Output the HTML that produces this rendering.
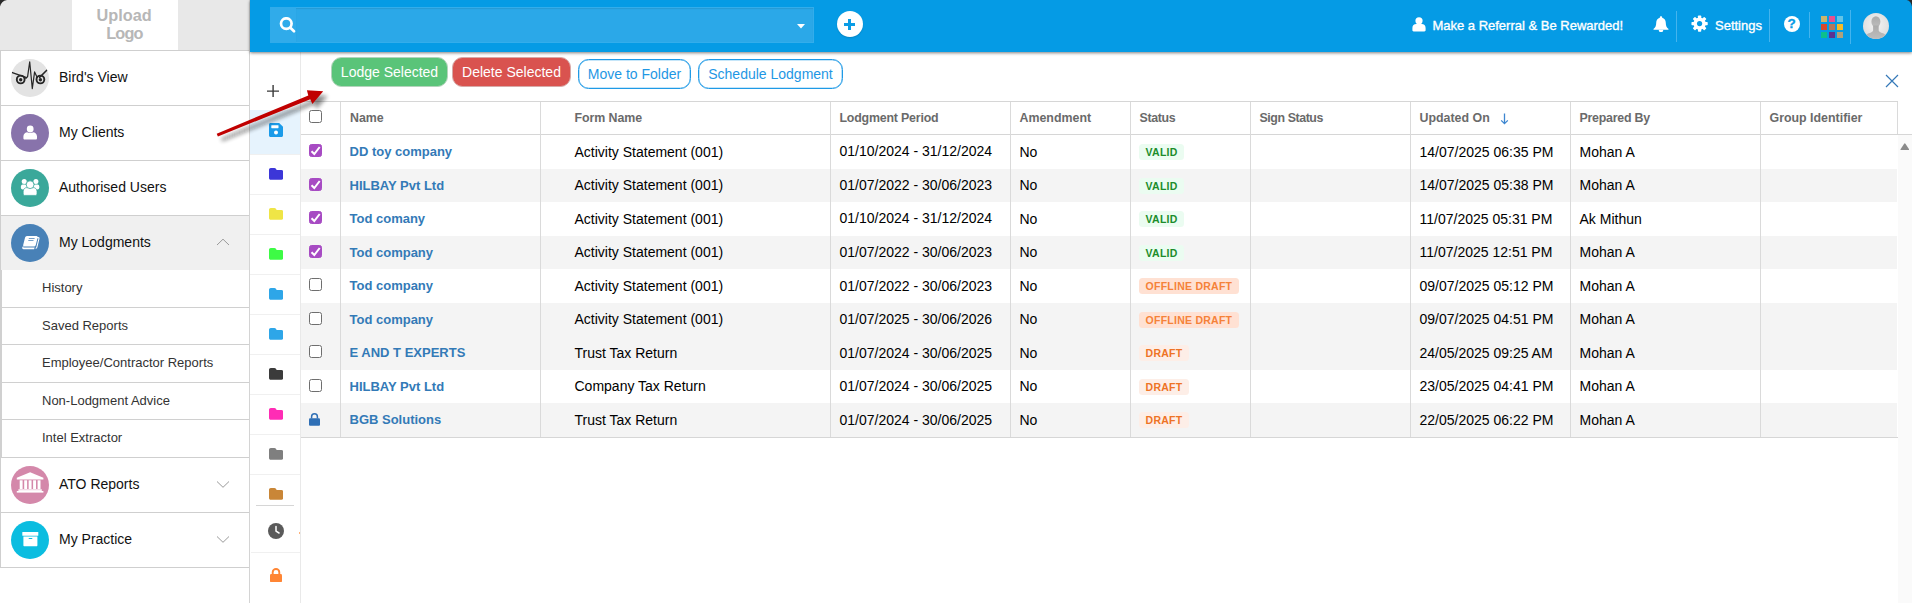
<!DOCTYPE html>
<html>
<head>
<meta charset="utf-8">
<title>My Lodgments</title>
<style>
*{box-sizing:border-box;margin:0;padding:0}
html,body{width:1912px;height:603px;overflow:hidden;background:#fff;font-family:"Liberation Sans",sans-serif;color:#000}
div,span{font-family:"Liberation Sans",sans-serif}
.a{position:absolute;white-space:nowrap}
#side{position:absolute;left:0;top:0;width:250px;height:603px;background:#fff;border-right:1px solid #d4d4d4}
#logo{position:absolute;left:0;top:0;width:249px;height:50px;background:#e8e8e8}
#logo .box{position:absolute;left:72px;top:0;width:106px;height:50px;background:#fff;text-align:center;color:#b7b7b7;font-weight:bold;font-size:16.300px;line-height:18px}
.mi{position:absolute;left:0;width:249px;height:56px;border-top:1px solid #cfcfcf;border-left:1px solid #cfcfcf;background:#fff}
.mi.sel{background:#f0f0f0}
.mi .ic{position:absolute;left:10px;top:8px;width:38px;height:38px;border-radius:50%;overflow:hidden}
.mi .tx{position:absolute;left:58px;top:0;line-height:53px;font-size:14px;color:#111;white-space:nowrap}
.mi svg.ch{position:absolute;left:214.800px;top:21px}
.si{position:absolute;left:0;width:249px;height:38px;border-top:1px solid #d0d0d0;border-left:2px solid #d0d0d0;font-size:13px;color:#333;padding-left:40px;line-height:36px;white-space:nowrap;background:#fff}
#top{z-index:5;position:absolute;left:250px;top:0;width:1662px;height:52px;background:#059be5;box-shadow:0 1px 3px rgba(0,0,0,.5)}
#search{position:absolute;left:20px;top:7px;width:544px;height:36px;background:#2ba8e8;box-shadow:inset 0 0 0 1px #33adeb}
.vs{position:absolute;width:1px;background:#44b4ee}
.tt{position:absolute;color:#fff;font-size:13px;white-space:nowrap;-webkit-text-stroke:.35px #fff}
#strip{position:absolute;left:250px;top:52px;width:51px;height:551px;background:#fff;border-right:1px solid #e9e9e9}
.fi{position:absolute;left:0;width:50px;height:40px;border-top:1px solid #f1f1f1}
.fi svg{position:absolute;left:18px;top:13px}
.btn{position:absolute;border-radius:10.500px;font-size:14px;text-align:center;white-space:nowrap}
#tbl{position:absolute;left:301px;top:101px;width:1597px;height:337px;border-top:1px solid #d6d6d6;border-bottom:1px solid #d6d6d6}
.vl{position:absolute;top:0;width:1px;height:335px;background:#dadada}
.row{position:absolute;left:0;width:1596px;height:33.5px}
.row.g{background:#f4f4f4}
.th{position:absolute;top:0;height:32px;line-height:32px;font-size:12.4px;font-weight:bold;color:#6a6a6a;white-space:nowrap}
.c{position:absolute;top:0;height:34px;line-height:34px;font-size:14px;color:#000;white-space:nowrap}
.c.nm{color:#337ab7;font-weight:bold;font-size:13px}
.bd{position:absolute;height:15.5px;border-radius:3.5px;font-size:10.5px;letter-spacing:.25px;font-weight:bold;line-height:16px;padding:0 6.4px 0 6.6px;white-space:nowrap}
.bd.v{background:#ebfcf1;color:#1b8d2b}
.bd.o{background:#ffe1d3;color:#f58239}
.bd.d{background:#fdeee7;color:#ee7325}
.cb{position:absolute;left:8px;width:13px;height:13px;border:1px solid #6e6e6e;border-radius:2.5px;background:#fff}
.cb.on{background:#a74bc3;border-color:#a74bc3}
.cb.on svg{position:absolute;left:-1px;top:-1px}
</style>
</head>
<body>
<div id="side">
<div id="logo"><div class="box"><span class="a" style="left:24.500px;top:6.400px">Upload</span><span class="a" style="left:34.200px;top:23.700px;letter-spacing:-.85px">Logo</span></div></div><svg class="a" style="left:0;top:0" width="8" height="8" viewBox="0 0 8 8"><path d="M0 0 H7 C3 .8 .8 3 0 6.600z" fill="#2a2a2a"/></svg>
<div class="mi" style="top:50px"><div class="ic" style="background:#e3e3e3"><svg width="38" height="38" viewBox="0 0 38 38"><g fill="none" stroke="#262626" stroke-linecap="round" stroke-linejoin="round"><path d="M1.300 13.600 L15.600 18.600" stroke-width="1.500"/><path d="M36 11 L28.600 18.400" stroke-width="1.500"/><circle cx="9.700" cy="20.500" r="3.900" stroke-width="1.900"/><circle cx="29.400" cy="20.500" r="3.900" stroke-width="1.900"/><path d="M14.800 19.400 L16.600 17.600 L18.700 2.800 L21.300 29.600 L23.600 12.900 L26.200 18.400" stroke-width="1.200"/></g><circle cx="9.700" cy="20.700" r="1.700" fill="#262626"/><circle cx="29.400" cy="20.700" r="1.700" fill="#262626"/></svg></div><div class="tx">Bird&#x27;s View</div></div>
<div class="mi" style="top:105px"><div class="ic" style="background:#8873ab"><svg width="38" height="38" viewBox="0 0 38 38"><path d="M12.400 24.200 v-1.600 c0-2.700 1.900-4.300 4.100-4.300 h5.400 c2.200 0 4.100 1.600 4.100 4.300 v1.600 c0 .8-.5 1.300-1.300 1.300 h-11 c-.8 0-1.300-.5-1.300-1.300z" fill="#fff"/><circle cx="19.200" cy="15" r="4" fill="#8873ab"/><circle cx="19.200" cy="15" r="3.400" fill="#fff"/></svg></div><div class="tx">My Clients</div></div>
<div class="mi" style="top:160px"><div class="ic" style="background:#3aa89a"><svg width="38" height="38" viewBox="0 0 38 38" fill="#fff"><circle cx="13.200" cy="12.600" r="2.500"/><circle cx="24.900" cy="12.600" r="2.500"/><rect x="9.900" y="15.600" width="6" height="5" rx="1.800"/><rect x="22.300" y="15.600" width="6" height="5" rx="1.800"/><path d="M12.200 25 v-2.400 c0-2.600 1.700-4 3.700-4 h6.400 c2 0 3.700 1.400 3.700 4 V25 c0 .8-.5 1.400-1.300 1.400 h-11.200 c-.8 0-1.300-.6-1.300-1.400z" stroke="#3aa89a" stroke-width=".7"/><circle cx="19.100" cy="15.700" r="3.900" stroke="#3aa89a" stroke-width=".8"/></svg></div><div class="tx">Authorised Users</div></div>
<div class="mi sel" style="top:215px"><div class="ic" style="background:#4881b7"><svg width="38" height="38" viewBox="0 0 38 38"><g transform="translate(19.300,19) skewX(-14)"><path d="M-4 -5.400 h10.600 c.6 0 1 .4 1 1 v8.600 c0 .6-.4 1-1 1" fill="none" stroke="#fff" stroke-width="1.100"/><rect x="-6.600" y="-7" width="12.600" height="10.600" rx="1.500" fill="#fff"/><path d="M-6.600 3.600 h12 v2.600 h-10.700 c-1.600 0-1.900-1.700-1.300-2.600z" fill="#fff"/><path d="M-5.900 4.100 h11.600" stroke="#4881b7" stroke-width=".8"/><path d="M-2.600 -4.400 h5.800 M-2.600 -2.400 h5.200" stroke="#4881b7" stroke-width=".9"/></g></svg></div><div class="tx">My Lodgments</div><svg class="ch" width="14" height="10" viewBox="0 0 14 10"><path d="M1 8 L7 2.2 L13 8" fill="none" stroke="#9a9a9a" stroke-width="1"/></svg></div>
<div class="si" style="top:270px;height:37px;line-height:35px;border-top:0">History</div>
<div class="si" style="top:307px;height:37px;line-height:35px">Saved Reports</div>
<div class="si" style="top:344px;height:38px;line-height:35px">Employee/Contractor Reports</div>
<div class="si" style="top:382px;height:37px;line-height:35px">Non-Lodgment Advice</div>
<div class="si" style="top:419px;height:38px;line-height:35px">Intel Extractor</div>
<div class="mi" style="top:457px"><div class="ic" style="background:#d488aa"><svg width="38" height="38" viewBox="0 0 38 38" fill="#fff"><path d="M19.100 6.200 L32.400 11.700 V13.500 H5.800 V11.700z"/><rect x="8.700" y="14.300" width="2.900" height="8.700"/><rect x="13.200" y="14.300" width="2.900" height="8.700"/><rect x="17.650" y="14.300" width="2.900" height="8.700"/><rect x="22.100" y="14.300" width="2.900" height="8.700"/><rect x="26.600" y="14.300" width="2.900" height="8.700"/><rect x="7.400" y="23.300" width="23.400" height="1.600"/><rect x="5.800" y="25" width="26.600" height="1.600"/></svg></div><div class="tx">ATO Reports</div><svg class="ch" width="14" height="10" viewBox="0 0 14 10"><path d="M1 2.5 L7 8.3 L13 2.5" fill="none" stroke="#9a9a9a" stroke-width="1"/></svg></div>
<div class="mi" style="top:512px"><div class="ic" style="background:#0bbde0"><svg width="38" height="38" viewBox="0 0 38 38" fill="#fff"><rect x="11.300" y="11.100" width="16" height="3.700" rx=".5"/><path d="M12.400 15.500 h14 v8.700 c0 .6-.4 1-1 1 h-12 c-.6 0-1-.4-1-1z"/><rect x="17.600" y="17" width="3.800" height="1.100" rx=".55" fill="#0bbde0"/></svg></div><div class="tx">My Practice</div><svg class="ch" width="14" height="10" viewBox="0 0 14 10"><path d="M1 2.5 L7 8.3 L13 2.5" fill="none" stroke="#9a9a9a" stroke-width="1"/></svg></div>
<div class="a" style="left:0;top:567px;width:249px;height:36px;background:#fff;border-top:1px solid #cfcfcf"></div>
</div>
<div id="top">
<div id="search"><div class="a" style="left:0;top:0;width:26px;height:36px;background:#30abea"></div><div class="a" style="left:26px;top:1px;width:517px;height:34px;box-shadow:inset 0 1px 1px rgba(0,0,0,.085)"></div></div>
<svg class="a" style="left:29px;top:17px" width="17" height="17" viewBox="0 0 17 17"><circle cx="7.300" cy="6.600" r="5.300" fill="none" stroke="#fff" stroke-width="2.700"/><path d="M11.400 10.700 L15 14.200" stroke="#fff" stroke-width="2.700" stroke-linecap="round"/></svg>
<svg class="a" style="left:546.500px;top:23.700px" width="8" height="5" viewBox="0 0 8 5"><path d="M0 0 h8 l-4 4.5z" fill="#fff"/></svg>
<div class="a" style="left:587px;top:11px;width:26px;height:26px;border-radius:50%;background:#fff;box-shadow:0 1px 1.500px rgba(0,0,0,.15)"></div>
<div class="a" style="left:598px;top:19px;width:3px;height:11px;background:#0a9ce5"></div><div class="a" style="left:594px;top:23px;width:11px;height:3px;background:#0a9ce5"></div>
<svg class="a" style="left:1161px;top:16px" width="16" height="16" viewBox="0 0 16 16" fill="#fff"><circle cx="8" cy="4.8" r="3.6"/><path d="M1.4 14.2 v-2.2 c0-2.4 1.6-4 3.8-4 h5.6 c2.2 0 3.8 1.6 3.8 4 v2.2 c0 .7-.5 1.2-1.2 1.2 h-10.8 c-.7 0-1.2-.5-1.2-1.2z"/></svg>
<div class="tt" style="left:1182.400px;top:18px">Make a Referral &amp; Be Rewarded!</div>
<svg class="a" style="left:1403.200px;top:15.800px" width="16" height="16.600" viewBox="0 0 16 17" fill="#fff"><path d="M8 .2 c.7 0 1.200.5 1.200 1.200 v.3 c2.300.6 3.700 2.600 3.700 5.100 c0 3.200.9 4.900 2.600 6.200 c.4.3.2 1.100-.4 1.100 H.9 c-.6 0-.8-.8-.4-1.100 c1.700-1.300 2.600-3 2.600-6.200 c0-2.500 1.400-4.500 3.700-5.100 v-.3 c0-.7.5-1.200 1.200-1.200z"/><path d="M5.700 14 h4.600 c0 1.500-1 2.700-2.300 2.700 s-2.300-1.200-2.300-2.700z"/></svg>
<div class="vs" style="left:1426px;top:11px;height:31px"></div>
<svg class="a" style="left:1441px;top:15px" width="17.200" height="17.200" viewBox="-8.600 -8.600 17.200 17.200"><g fill="#fff"><circle r="6.150"/><rect x="-1.650" y="-8.150" width="3.300" height="16.300" rx=".7" transform="rotate(0)"/><rect x="-1.650" y="-8.150" width="3.300" height="16.300" rx=".7" transform="rotate(45)"/><rect x="-1.650" y="-8.150" width="3.300" height="16.300" rx=".7" transform="rotate(90)"/><rect x="-1.650" y="-8.150" width="3.300" height="16.300" rx=".7" transform="rotate(135)"/></g><circle r="2.600" fill="#059be5"/></svg>
<div class="tt" style="left:1465px;top:18px">Settings</div>
<div class="vs" style="left:1519px;top:9px;height:33px"></div>
<div class="a" style="left:1533.500px;top:15.500px;width:16px;height:16px;border-radius:50%;background:#fff;color:#059be5;font-size:13.500px;font-weight:bold;line-height:16.500px;text-align:center;-webkit-text-stroke:.3px #059be5">?</div>
<div class="vs" style="left:1559px;top:12px;height:26px"></div>
<div class="a" style="left:1571px;top:16px;width:6px;height:6px;background:#c9b56e"></div>
<div class="a" style="left:1579px;top:16px;width:6px;height:6px;background:#e8508f"></div>
<div class="a" style="left:1587px;top:16px;width:6px;height:6px;background:#63c4e6"></div>
<div class="a" style="left:1571px;top:24px;width:6px;height:6px;background:#d9482b"></div>
<div class="a" style="left:1579px;top:24px;width:6px;height:6px;background:#b5785a"></div>
<div class="a" style="left:1587px;top:24px;width:6px;height:6px;background:#f5bc25"></div>
<div class="a" style="left:1571px;top:32px;width:6px;height:6px;background:#0cc08c"></div>
<div class="a" style="left:1579px;top:32px;width:6px;height:6px;background:#5a3392"></div>
<div class="a" style="left:1587px;top:32px;width:6px;height:6px;background:#b0a17c"></div>
<div class="vs" style="left:1600px;top:10px;height:34px"></div>
<div class="a" style="left:1613px;top:12.700px;width:26px;height:26px;border-radius:50%;background:radial-gradient(circle at 50% 45%,#f4f4f4 0,#e2e2e2 60%,#d2d2d2 100%);overflow:hidden"><svg width="26" height="26" viewBox="0 0 26 26"><defs><linearGradient id="av" x1="0" y1="0" x2="0" y2="1"><stop offset="0" stop-color="#ababab"/><stop offset="1" stop-color="#bdbdbd"/></linearGradient></defs><g fill="url(#av)"><ellipse cx="12.900" cy="8.800" rx="4.500" ry="5.600"/><path d="M10.100 12.500 V17.600 C10.100 18.900 8.200 19.600 5.900 20.300 C4 20.900 3 22 2.400 26 H23.400 C22.800 22 21.800 20.900 19.900 20.300 C17.600 19.600 15.700 18.900 15.700 17.600 V12.500z"/></g></svg></div>
</div>
<svg class="a" style="z-index:6;left:1896px;top:0" width="16" height="16" viewBox="0 0 16 16"><path d="M16 0 H10.800 C13.800 .8 15.400 3 16 6.600z" fill="#2a2a2a"/></svg>
<div id="strip">
<svg class="a" style="left:16.800px;top:32.800px" width="12.200" height="12.200" viewBox="0 0 13 13"><path d="M6.500 0 V13 M0 6.500 H13" stroke="#3a3a3a" stroke-width="1.500"/></svg>
<div class="a" style="left:0;top:58px;width:50px;height:44px;background:#e6f3fd"></div>
<svg class="a" style="left:19px;top:71px" width="14" height="14" viewBox="0 0 14 14"><path d="M1.500 0 h8.700 L14 3.800 V12.500 c0 .8-.7 1.500-1.500 1.500 h-11 C.7 14 0 13.300 0 12.500 v-11 C0 .7 .7 0 1.500 0z" fill="#1b9be9"/><rect x="2.300" y="2.200" width="7.200" height="3" rx=".4" fill="#fff"/><circle cx="7" cy="9.600" r="2" fill="#fff"/></svg>
<div class="a" style="left:0;top:102px;width:50px;height:1px;background:#f0f0f0"></div>
<svg class="a" style="left:19px;top:116px" width="14.300" height="11.800" viewBox="0 0 14.300 11.800"><path d="M1.800 0 h3.600 c.6 0 1 .2 1.300.6 l1 1.400 h4.800 c1 0 1.800.8 1.800 1.800 v6.200 c0 1-.8 1.800-1.800 1.800 h-10.700 c-1 0-1.800-.8-1.800-1.800 v-8.200 c0-1 .8-1.800 1.800-1.800z" fill="#3c36d8"/></svg>
<div class="a" style="left:0;top:142px;width:50px;height:1px;background:#f0f0f0"></div>
<svg class="a" style="left:19px;top:156px" width="14.300" height="11.800" viewBox="0 0 14.300 11.800"><path d="M1.800 0 h3.600 c.6 0 1 .2 1.300.6 l1 1.400 h4.800 c1 0 1.800.8 1.800 1.800 v6.200 c0 1-.8 1.800-1.800 1.800 h-10.700 c-1 0-1.800-.8-1.800-1.800 v-8.200 c0-1 .8-1.800 1.800-1.800z" fill="#efe546"/></svg>
<div class="a" style="left:0;top:182px;width:50px;height:1px;background:#f0f0f0"></div>
<svg class="a" style="left:19px;top:196px" width="14.300" height="11.800" viewBox="0 0 14.300 11.800"><path d="M1.800 0 h3.600 c.6 0 1 .2 1.300.6 l1 1.400 h4.800 c1 0 1.800.8 1.800 1.800 v6.200 c0 1-.8 1.800-1.800 1.800 h-10.700 c-1 0-1.800-.8-1.800-1.800 v-8.200 c0-1 .8-1.800 1.800-1.800z" fill="#3dfb45"/></svg>
<div class="a" style="left:0;top:222px;width:50px;height:1px;background:#f0f0f0"></div>
<svg class="a" style="left:19px;top:236px" width="14.300" height="11.800" viewBox="0 0 14.300 11.800"><path d="M1.800 0 h3.600 c.6 0 1 .2 1.300.6 l1 1.400 h4.800 c1 0 1.800.8 1.800 1.800 v6.200 c0 1-.8 1.800-1.800 1.800 h-10.700 c-1 0-1.800-.8-1.800-1.800 v-8.200 c0-1 .8-1.800 1.800-1.800z" fill="#2ea6e8"/></svg>
<div class="a" style="left:0;top:262px;width:50px;height:1px;background:#f0f0f0"></div>
<svg class="a" style="left:19px;top:276px" width="14.300" height="11.800" viewBox="0 0 14.300 11.800"><path d="M1.800 0 h3.600 c.6 0 1 .2 1.300.6 l1 1.400 h4.800 c1 0 1.800.8 1.800 1.800 v6.200 c0 1-.8 1.800-1.800 1.800 h-10.700 c-1 0-1.800-.8-1.800-1.800 v-8.200 c0-1 .8-1.800 1.800-1.800z" fill="#2ea6e8"/></svg>
<div class="a" style="left:0;top:302px;width:50px;height:1px;background:#f0f0f0"></div>
<svg class="a" style="left:19px;top:316px" width="14.300" height="11.800" viewBox="0 0 14.300 11.800"><path d="M1.800 0 h3.600 c.6 0 1 .2 1.300.6 l1 1.400 h4.800 c1 0 1.800.8 1.800 1.800 v6.200 c0 1-.8 1.800-1.800 1.800 h-10.700 c-1 0-1.800-.8-1.800-1.800 v-8.200 c0-1 .8-1.800 1.800-1.800z" fill="#3b3b3b"/></svg>
<div class="a" style="left:0;top:342px;width:50px;height:1px;background:#f0f0f0"></div>
<svg class="a" style="left:19px;top:356px" width="14.300" height="11.800" viewBox="0 0 14.300 11.800"><path d="M1.800 0 h3.600 c.6 0 1 .2 1.300.6 l1 1.400 h4.800 c1 0 1.800.8 1.800 1.800 v6.200 c0 1-.8 1.800-1.800 1.800 h-10.700 c-1 0-1.800-.8-1.800-1.800 v-8.200 c0-1 .8-1.800 1.800-1.800z" fill="#ff2cb5"/></svg>
<div class="a" style="left:0;top:382px;width:50px;height:1px;background:#f0f0f0"></div>
<svg class="a" style="left:19px;top:396px" width="14.300" height="11.800" viewBox="0 0 14.300 11.800"><path d="M1.800 0 h3.600 c.6 0 1 .2 1.300.6 l1 1.400 h4.800 c1 0 1.800.8 1.800 1.800 v6.200 c0 1-.8 1.800-1.800 1.800 h-10.700 c-1 0-1.800-.8-1.800-1.800 v-8.200 c0-1 .8-1.800 1.800-1.800z" fill="#7f7f7f"/></svg>
<div class="a" style="left:0;top:422px;width:50px;height:1px;background:#f0f0f0"></div>
<svg class="a" style="left:19px;top:436px" width="14.300" height="11.800" viewBox="0 0 14.300 11.800"><path d="M1.800 0 h3.600 c.6 0 1 .2 1.300.6 l1 1.400 h4.800 c1 0 1.800.8 1.800 1.800 v6.200 c0 1-.8 1.800-1.800 1.800 h-10.700 c-1 0-1.800-.8-1.800-1.800 v-8.200 c0-1 .8-1.800 1.800-1.800z" fill="#c98637"/></svg>
<div class="a" style="left:6px;top:453px;width:38px;height:1px;background:#d6d6d6"></div><div class="a" style="left:48.500px;top:480px;width:1.500px;height:1.500px;background:#ffb27a"></div>
<svg class="a" style="left:18px;top:471px" width="16" height="16" viewBox="0 0 16 16"><circle cx="8" cy="8" r="8" fill="#5a5a5a"/><path d="M8 3.500 V8.200 L11 10" fill="none" stroke="#fff" stroke-width="1.500" stroke-linecap="round" stroke-linejoin="round"/></svg>
<div class="a" style="left:1px;top:500px;width:49px;height:1px;background:#f0f0f0"></div>
<svg class="a" style="left:20px;top:515.800px" width="12" height="14.300" viewBox="0 0 12 14.300"><path d="M2.700 6.300 V4.300 a3.300 3.300 0 0 1 6.600 0 V6.300" fill="none" stroke="#ff8534" stroke-width="1.900"/><rect x="0" y="5.900" width="12" height="8.400" rx="1.300" fill="#ff8534"/></svg>
</div>
<div class="btn" style="left:331px;top:57px;width:117px;height:30px;background:#5ac479;border:1px solid #b4d3bc;color:#fff;line-height:28px">Lodge Selected</div>
<div class="btn" style="left:452px;top:57px;width:119px;height:30px;background:#d9534f;border:1px solid #d6aaa8;color:#fff;line-height:28px">Delete Selected</div>
<div class="btn" style="left:578px;top:59px;width:113px;height:30px;background:#fff;border:1px solid #1f9ae6;color:#1f97e4;line-height:28px;box-shadow:inset 0 0 0 .3px #1f9ae6">Move to Folder</div>
<div class="btn" style="left:698px;top:59px;width:145px;height:30px;background:#fff;border:1px solid #1f9ae6;color:#1f97e4;line-height:28px;box-shadow:inset 0 0 0 .3px #1f9ae6">Schedule Lodgment</div>
<svg class="a" style="left:1885.300px;top:74.200px" width="14" height="14" viewBox="0 0 14 14"><path d="M1 1 L13 13 M13 1 L1 13" stroke="#3579b8" stroke-width="1.200"/></svg>
<div id="tbl">
<div class="a" style="left:0;top:32px;width:1596px;height:1px;background:#d6d6d6"></div>
<div class="cb" style="top:8px"></div>
<div class="th" style="left:49px">Name</div>
<div class="th" style="left:273.5px;letter-spacing:-0.07px">Form Name</div>
<div class="th" style="left:538.5px;letter-spacing:-0.2px">Lodgment Period</div>
<div class="th" style="left:718.5px">Amendment</div>
<div class="th" style="left:838.5px;letter-spacing:-0.35px">Status</div>
<div class="th" style="left:958.5px;letter-spacing:-0.43px">Sign Status</div>
<div class="th" style="left:1118.5px">Updated On</div>
<div class="th" style="left:1278.5px;letter-spacing:-0.24px">Prepared By</div>
<div class="th" style="left:1468.5px">Group Identifier</div>
<svg class="a" style="left:1199px;top:10.500px" width="9" height="12" viewBox="0 0 9 12"><path d="M4.500 .5 V10.500 M1.200 7.400 L4.500 10.700 L7.800 7.400" fill="none" stroke="#3d86d0" stroke-width="1.300"/></svg>
<div class="a" style="left:0;top:67px;width:1596px;height:33px;background:#f4f4f4"></div>
<div class="a" style="left:0;top:134px;width:1596px;height:33px;background:#f4f4f4"></div>
<div class="a" style="left:0;top:201px;width:1596px;height:33px;background:#f4f4f4"></div>
<div class="a" style="left:0;top:234px;width:1596px;height:34px;background:#f4f4f4"></div>
<div class="a" style="left:0;top:301px;width:1596px;height:34px;background:#f4f4f4"></div>
<div class="row" style="top:33px;height:33px">
<div class="cb on" style="top:9px"><svg width="13" height="13" viewBox="0 0 13 13"><path d="M2.500 7.200 L5.300 10 L10.700 3" fill="none" stroke="#fff" stroke-width="2"/></svg></div>
<div class="c nm" style="left:48.500px">DD toy company</div>
<div class="c" style="left:273.500px">Activity Statement (001)</div>
<div class="c" style="left:538.500px;top:-1px">01/10/2024 - 31/12/2024</div>
<div class="c" style="left:718.500px">No</div>
<div class="bd v" style="left:838px;top:9px">VALID</div>
<div class="c" style="left:1118.500px">14/07/2025 06:35 PM</div>
<div class="c" style="left:1278.500px">Mohan A</div>
</div>
<div class="row" style="top:66px;height:34px">
<div class="cb on" style="top:10px"><svg width="13" height="13" viewBox="0 0 13 13"><path d="M2.500 7.200 L5.300 10 L10.700 3" fill="none" stroke="#fff" stroke-width="2"/></svg></div>
<div class="c nm" style="left:48.500px;top:1px">HILBAY Pvt Ltd</div>
<div class="c" style="left:273.500px">Activity Statement (001)</div>
<div class="c" style="left:538.500px">01/07/2022 - 30/06/2023</div>
<div class="c" style="left:718.500px">No</div>
<div class="bd v" style="left:838px;top:10px">VALID</div>
<div class="c" style="left:1118.500px">14/07/2025 05:38 PM</div>
<div class="c" style="left:1278.500px">Mohan A</div>
</div>
<div class="row" style="top:100px;height:33px">
<div class="cb on" style="top:9px"><svg width="13" height="13" viewBox="0 0 13 13"><path d="M2.500 7.200 L5.300 10 L10.700 3" fill="none" stroke="#fff" stroke-width="2"/></svg></div>
<div class="c nm" style="left:48.500px">Tod comany</div>
<div class="c" style="left:273.500px">Activity Statement (001)</div>
<div class="c" style="left:538.500px;top:-1px">01/10/2024 - 31/12/2024</div>
<div class="c" style="left:718.500px">No</div>
<div class="bd v" style="left:838px;top:9px">VALID</div>
<div class="c" style="left:1118.500px">11/07/2025 05:31 PM</div>
<div class="c" style="left:1278.500px">Ak Mithun</div>
</div>
<div class="row" style="top:133px;height:34px">
<div class="cb on" style="top:10px"><svg width="13" height="13" viewBox="0 0 13 13"><path d="M2.500 7.200 L5.300 10 L10.700 3" fill="none" stroke="#fff" stroke-width="2"/></svg></div>
<div class="c nm" style="left:48.500px;top:1px">Tod company</div>
<div class="c" style="left:273.500px">Activity Statement (001)</div>
<div class="c" style="left:538.500px">01/07/2022 - 30/06/2023</div>
<div class="c" style="left:718.500px">No</div>
<div class="bd v" style="left:838px;top:10px">VALID</div>
<div class="c" style="left:1118.500px">11/07/2025 12:51 PM</div>
<div class="c" style="left:1278.500px">Mohan A</div>
</div>
<div class="row" style="top:167px;height:33px">
<div class="cb" style="top:9px"></div>
<div class="c nm" style="left:48.500px">Tod company</div>
<div class="c" style="left:273.500px">Activity Statement (001)</div>
<div class="c" style="left:538.500px">01/07/2022 - 30/06/2023</div>
<div class="c" style="left:718.500px">No</div>
<div class="bd o" style="left:838px;top:9px">OFFLINE DRAFT</div>
<div class="c" style="left:1118.500px">09/07/2025 05:12 PM</div>
<div class="c" style="left:1278.500px">Mohan A</div>
</div>
<div class="row" style="top:200px;height:34px">
<div class="cb" style="top:10px"></div>
<div class="c nm" style="left:48.500px;top:1px">Tod company</div>
<div class="c" style="left:273.500px">Activity Statement (001)</div>
<div class="c" style="left:538.500px">01/07/2025 - 30/06/2026</div>
<div class="c" style="left:718.500px">No</div>
<div class="bd o" style="left:838px;top:10px">OFFLINE DRAFT</div>
<div class="c" style="left:1118.500px">09/07/2025 04:51 PM</div>
<div class="c" style="left:1278.500px">Mohan A</div>
</div>
<div class="row" style="top:234px;height:33px">
<div class="cb" style="top:9px"></div>
<div class="c nm" style="left:48.500px">E AND T EXPERTS</div>
<div class="c" style="left:273.500px">Trust Tax Return</div>
<div class="c" style="left:538.500px">01/07/2024 - 30/06/2025</div>
<div class="c" style="left:718.500px">No</div>
<div class="bd d" style="left:838px;top:9px">DRAFT</div>
<div class="c" style="left:1118.500px">24/05/2025 09:25 AM</div>
<div class="c" style="left:1278.500px">Mohan A</div>
</div>
<div class="row" style="top:267px;height:34px">
<div class="cb" style="top:10px"></div>
<div class="c nm" style="left:48.500px;top:1px">HILBAY Pvt Ltd</div>
<div class="c" style="left:273.500px">Company Tax Return</div>
<div class="c" style="left:538.500px">01/07/2024 - 30/06/2025</div>
<div class="c" style="left:718.500px">No</div>
<div class="bd d" style="left:838px;top:10px">DRAFT</div>
<div class="c" style="left:1118.500px">23/05/2025 04:41 PM</div>
<div class="c" style="left:1278.500px">Mohan A</div>
</div>
<div class="row" style="top:301px;height:34px">
<svg class="a" style="left:8.300px;top:9.500px" width="11" height="13" viewBox="0 0 11 13"><path d="M2.600 5.500 V3.700 a2.900 2.900 0 0 1 5.800 0 V5.500" fill="none" stroke="#2f6fb5" stroke-width="1.500"/><rect x="0" y="5.300" width="11" height="7.500" rx="1.100" fill="#2f6fb5"/></svg>
<div class="c nm" style="left:48.500px">BGB Solutions</div>
<div class="c" style="left:273.500px">Trust Tax Return</div>
<div class="c" style="left:538.500px">01/07/2024 - 30/06/2025</div>
<div class="c" style="left:718.500px">No</div>
<div class="bd d" style="left:838px;top:9px">DRAFT</div>
<div class="c" style="left:1118.500px">22/05/2025 06:22 PM</div>
<div class="c" style="left:1278.500px">Mohan A</div>
</div>
<div class="vl" style="left:39px"></div>
<div class="vl" style="left:239px"></div>
<div class="vl" style="left:529px"></div>
<div class="vl" style="left:709px"></div>
<div class="vl" style="left:829px"></div>
<div class="vl" style="left:949px"></div>
<div class="vl" style="left:1109px"></div>
<div class="vl" style="left:1269px"></div>
<div class="vl" style="left:1459px"></div>
<div class="vl" style="left:1596px;height:33px"></div>
</div>
<div class="a" style="left:1898px;top:135px;width:14px;height:468px;background:#fafafa"></div>
<div class="a" style="left:1897px;top:134px;width:15px;height:1px;background:#d6d6d6"></div>
<svg class="a" style="left:1899.700px;top:142.600px" width="9.600" height="7.400" viewBox="0 0 9.600 7.400"><path d="M.7 6 L4 .9 Q4.800 -.2 5.600 .9 L8.900 6 Q9.600 7.400 8.300 7.400 H1.300 Q0 7.400 .7 6z" fill="#8b8b8b"/></svg>
<svg class="a" style="left:200px;top:75px" width="150" height="80" viewBox="0 0 150 80"><defs><filter id="sh" x="-20%" y="-30%" width="150%" height="180%"><feGaussianBlur stdDeviation="2"/></filter></defs><path d="M17.900 61.500 L16.700 58.700 L108.300 20.400 L106.900 15.200 L123.200 16.300 L112.400 28.900 L110.300 24.200 z" transform="translate(4.300,4.800)" filter="url(#sh)" fill="#111" opacity=".48"/><path d="M17.900 61.500 L16.700 58.700 L108.300 20.400 L106.900 15.200 L123.200 16.300 L112.400 28.900 L110.300 24.200 z" fill="#c00000"/></svg>
</body>
</html>
